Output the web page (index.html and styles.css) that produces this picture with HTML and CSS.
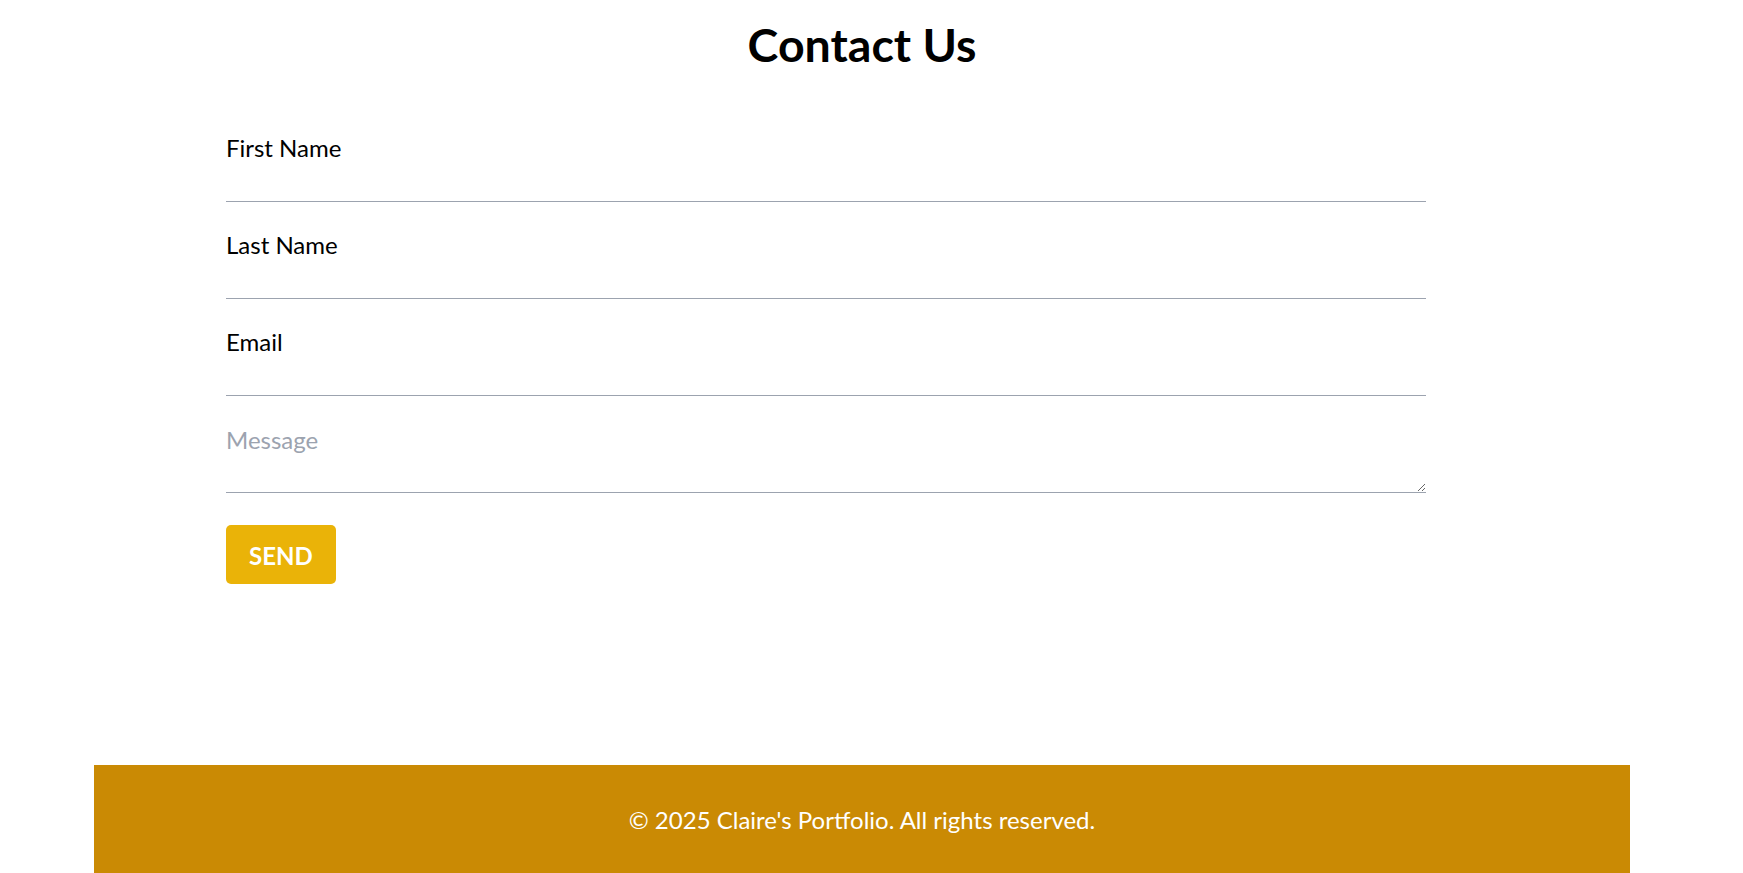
FILE: index.html
```html
<!DOCTYPE html>
<html lang="en">
<head>
<meta charset="utf-8">
<title>Contact Us</title>
<link rel="stylesheet" href="styles.css">
</head>
<body>
<div class="page">
  <main class="contact">
    <h1 class="contact-title">Contact Us</h1>
    <form class="contact-form">
      <input class="field field-input" type="text" placeholder="First Name">
      <input class="field field-input" type="text" placeholder="Last Name">
      <input class="field field-input" type="email" placeholder="Email">
      <textarea class="field field-area" placeholder="Message"></textarea>
      <button class="send-btn" type="button">SEND</button>
    </form>
  </main>
  <footer class="site-footer">
    <p class="footer-text">© 2025 Claire's Portfolio. All rights reserved.</p>
  </footer>
</div>
</body>
</html>
```

FILE: styles.css
```css
html, body {
  margin: 0;
  padding: 0;
  background: #ffffff;
  overflow: hidden;
}

body {
  font-family: "Lato", "Open Sans", sans-serif;
  color: #000;
}

.page {
  width: 1724px;
}

.contact {
  width: 1536px;
  margin: 0 auto;
  padding-bottom: 181px;
}

.contact-title {
  margin: 0;
  padding-top: 16px;
  font-size: 46.5px;
  line-height: 56px;
  font-weight: 700;
  text-align: center;
}

.contact-form {
  width: 1200px;
  margin-left: 132px;
  margin-top: 48px;
  display: flex;
  flex-direction: column;
  align-items: flex-start;
  gap: 15px;
}

.field {
  display: block;
  width: 100%;
  box-sizing: content-box;
  border: none;
  border-bottom: 1px solid #9ca3af;
  outline: none;
  background: transparent;
  font-family: inherit;
  font-size: 24px;
  line-height: 32px;
  color: #000;
  padding: 12px 0 37px;
  margin: 0;
  height: 32px;
}

.field-input::placeholder {
  color: #000;
  opacity: 1;
}

.field-area {
  padding: 13px 0 36px;
  height: 32px;
  resize: vertical;
}

.field-area::placeholder {
  color: #9ca3af;
  opacity: 1;
}

.send-btn {
  margin-top: 17px;
  background: #eab308;
  color: #fff;
  border: none;
  border-radius: 5px;
  font-family: inherit;
  font-size: 24px;
  font-weight: 700;
  line-height: 32px;
  padding: 15px 23px 12px;
  cursor: pointer;
}

.site-footer {
  width: 1536px;
  margin: 0 auto;
  background: #ca8a04;
  padding: 39px 0 37px;
}

.footer-text {
  margin: 0;
  color: #fff;
  font-size: 24px;
  line-height: 32px;
  text-align: center;
}
```
